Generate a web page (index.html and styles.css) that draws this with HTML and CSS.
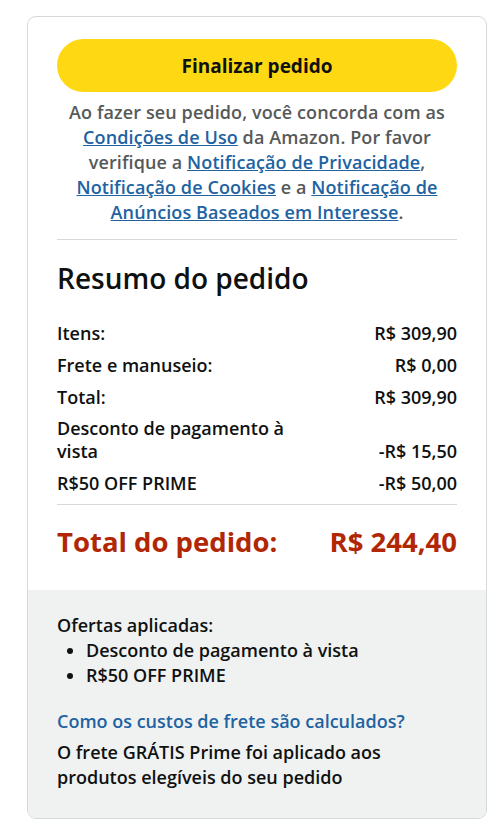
FILE: index.html
```html
<!DOCTYPE html>
<html lang="pt-BR">
<head>
<meta charset="utf-8">
<title>Resumo do pedido</title>
<link rel="stylesheet" href="styles.css">
</head>
<body>
<div class="card">
  <div class="top">
    <button class="btn-primary">Finalizar pedido</button>
    <p class="legal">Ao fazer seu pedido, você concorda com as <a href="#">Condições de Uso</a> da Amazon. Por favor verifique a <a href="#">Notificação de Privacidade</a>, <a href="#">Notificação de Cookies</a> e a <a href="#">Notificação de Anúncios Baseados em Interesse</a>.</p>
  </div>
  <div class="summary">
    <h2 class="summary-title">Resumo do pedido</h2>
    <div class="rows">
      <div class="row"><span>Itens:</span><span>R$ 309,90</span></div>
      <div class="row"><span>Frete e manuseio:</span><span>R$ 0,00</span></div>
      <div class="row"><span>Total:</span><span>R$ 309,90</span></div>
      <div class="row row-multi"><span class="label-wrap">Desconto de pagamento à vista</span><span>-R$ 15,50</span></div>
      <div class="row"><span>R$50 OFF PRIME</span><span>-R$ 50,00</span></div>
    </div>
    <div class="grand">
      <span>Total do pedido:</span><span>R$ 244,40</span>
    </div>
  </div>
  <div class="extra">
    <div class="offers-title">Ofertas aplicadas:</div>
    <ul class="offers">
      <li>Desconto de pagamento à vista</li>
      <li>R$50 OFF PRIME</li>
    </ul>
    <a class="ship-link" href="#">Como os custos de frete são calculados?</a>
    <p class="ship-note">O frete GRÁTIS Prime foi aplicado aos produtos elegíveis do seu pedido</p>
  </div>
</div>
</body>
</html>
```
FILE: styles.css
```css
* { box-sizing: border-box; }
html, body { margin: 0; padding: 0; background: #fff; }
body {
  font-family: "Open Sans", "Noto Sans", sans-serif;
  font-weight: 600;
  color: #0F1111;
  font-size: 18px;
}
.card {
  width: 460px;
  margin: 16px 0 0 27px;
  border: 1px solid #D5D9D9;
  border-radius: 9px;
  overflow: hidden;
  background: #fff;
}
.top {
  padding: 22px 29px 0 29px;
}
.btn-primary {
  display: block;
  width: 100%;
  height: 53px;
  border: none;
  border-radius: 27px;
  background: #FFD814;
  font-family: inherit;
  font-weight: 700;
  font-size: 19px;
  color: #0F1111;
  padding: 0;
}
.legal {
  margin: 8px 0 0;
  padding-bottom: 14px;
  border-bottom: 1px solid #D5D9D9;
  text-align: center;
  color: #565959;
  font-size: 18px;
  line-height: 25px;
  letter-spacing: 0.1px;
}
.legal a { color: #2162A1; text-decoration: underline; }
.summary {
  padding: 0 29px 30px 29px;
}
.summary-title {
  margin: 21px 0 0;
  font-size: 28px;
  line-height: 34px;
  font-weight: 600;
}
.rows {
  margin-top: 22px;
  padding-bottom: 5px;
  border-bottom: 1px solid #D5D9D9;
}
.row {
  display: flex;
  justify-content: space-between;
  align-items: flex-end;
  padding: 4px 0;
  line-height: 24px;
}
.row-multi { line-height: 23px; }
.label-wrap { width: 250px; }
.grand {
  display: flex;
  justify-content: space-between;
  margin-top: 19px;
  font-size: 27.5px;
  line-height: 36px;
  font-weight: 700;
  color: #B12704;
}
.extra {
  background: #F0F2F2;
  padding: 23px 29px 28px 29px;
  line-height: 25px;
}
.offers {
  margin: 0;
  padding-left: 29px;
}
.ship-link {
  display: block;
  margin-top: 21px;
  color: #2162A1;
  text-decoration: none;
}
.ship-note {
  margin: 6px 0 0;
  padding-right: 40px;
}
```
